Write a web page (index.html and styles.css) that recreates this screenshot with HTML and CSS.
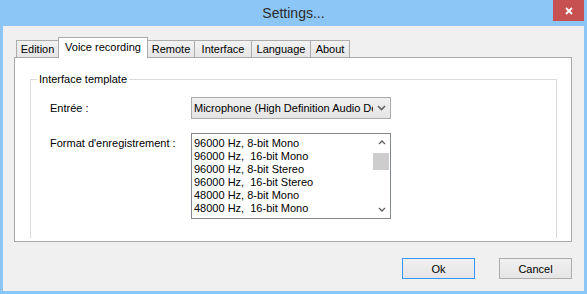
FILE: index.html
```html
<!DOCTYPE html>
<html>
<head>
    <meta charset="UTF-8">
    <title>Settings...</title>
    <link rel="stylesheet" href="styles.css">
</head>
<body>
    <div class="window">
        <div class="titlebar">
            <div class="title">Settings...</div>
            <button class="close-btn">
                <svg width="8" height="8" viewBox="0 0 8 8"><path d="M1 1L7 7M7 1L1 7" stroke="#ffffff" stroke-width="1.8"/></svg>
            </button>
        </div>

        <div class="client">
            <div class="tabs">
                <div class="tab tab-edition">Edition</div>
                <div class="tab tab-voice active">Voice recording</div>
                <div class="tab tab-remote">Remote</div>
                <div class="tab tab-interface">Interface</div>
                <div class="tab tab-language">Language</div>
                <div class="tab tab-about">About</div>
            </div>

            <div class="tab-page">
                <fieldset class="group">
                    <legend>Interface template</legend>

                    <div class="group-body">
                        <label class="field-label">Entrée :</label>
                        <div class="combo">
                            <span class="combo-text">Microphone (High Definition Audio Device)</span>
                            <span class="combo-arrow">
                                <svg width="9" height="6" viewBox="0 0 9 6"><path d="M1 1L4.5 4.5L8 1" fill="none" stroke="#606060" stroke-width="1.6"/></svg>
                            </span>
                        </div>

                        <label class="field-label field-label-top">Format d'enregistrement :</label>
                        <div class="listbox">
                            <ul class="list-items">
                                <li>96000 Hz, 8-bit Mono</li>
                                <li>96000 Hz,  16-bit Mono</li>
                                <li>96000 Hz, 8-bit Stereo</li>
                                <li>96000 Hz,  16-bit Stereo</li>
                                <li>48000 Hz, 8-bit Mono</li>
                                <li>48000 Hz,  16-bit Mono</li>
                            </ul>
                            <div class="scrollbar">
                                <div class="scroll-btn">
                                    <svg width="8" height="5" viewBox="0 0 8 5"><path d="M1 4L4 1L7 4" fill="none" stroke="#606060" stroke-width="1.4"/></svg>
                                </div>
                                <div class="scroll-track">
                                    <div class="scroll-thumb"></div>
                                </div>
                                <div class="scroll-btn">
                                    <svg width="8" height="5" viewBox="0 0 8 5"><path d="M1 1L4 4L7 1" fill="none" stroke="#606060" stroke-width="1.4"/></svg>
                                </div>
                            </div>
                        </div>
                    </div>
                </fieldset>
            </div>

            <div class="buttons">
                <button class="btn btn-default">Ok</button>
                <button class="btn">Cancel</button>
            </div>
        </div>
    </div>
</body>
</html>
```

FILE: styles.css
```css
/* Reset some default styles */
* {
    margin: 0;
    padding: 0;
    box-sizing: border-box;
}

body {
    width: 587px;
    height: 294px;
    font-family: "Liberation Sans", Arial, sans-serif;
    font-size: 11px;
    color: #000000;
    overflow: hidden;
}

.window {
    height: 294px;
    display: flex;
    flex-direction: column;
    background-color: #8cc6f6;
}

/* Title bar */
.titlebar {
    height: 26px;
    display: grid;
    grid-template-columns: 1fr auto 1fr;
    align-items: center;
}

.title {
    grid-column: 2;
    font-size: 14px;
    color: #2b2b2b;
}

.close-btn {
    grid-column: 3;
    justify-self: end;
    align-self: start;
    width: 31px;
    height: 21px;
    margin-right: 3px;
    border: none;
    background-color: #c75050;
    display: flex;
    justify-content: center;
    align-items: center;
}

/* Dialog body */
.client {
    flex: 1;
    margin: 0 3px 3px;
    padding: 11px 12px 12px 11px;
    background-color: #f0f0f0;
    display: flex;
    flex-direction: column;
}

.tabs {
    height: 20px;
    margin-left: 2px;
    display: flex;
    align-items: flex-end;
}

.tab {
    height: 17px;
    margin-left: -1px;
    border: 1px solid #acacac;
    border-bottom: none;
    background: linear-gradient(#f2f2f2, #e6e6e6);
    display: flex;
    justify-content: center;
    align-items: center;
    white-space: nowrap;
}

.tab:first-child {
    margin-left: 0;
}

.tab.active {
    height: 21px;
    margin-bottom: -1px;
    padding-bottom: 3px;
    background: #ffffff;
    position: relative;
    z-index: 1;
}

.tab-edition { width: 43px; }
.tab-voice { width: 90px; }
.tab-remote { width: 48px; }
.tab-interface { width: 58px; }
.tab-language { width: 60px; }
.tab-about { width: 40px; }

.tab-page {
    height: 185px;
    border: 1px solid #a9a9a9;
    background-color: #ffffff;
    padding: 0 14px 3px 15px;
    display: flex;
    flex-direction: column;
}

/* Group box */
.group {
    flex: 1;
    min-width: 0;
    margin-top: 15px;
    border: 1px solid #dcdcdc;
    border-bottom: none;
    padding: 0;
}

.group legend {
    margin-left: 6px;
    padding: 0 2px;
    line-height: 13px;
}

.group-body {
    padding: 11px 0 0 19px;
    display: grid;
    grid-template-columns: 141px 200px;
    grid-template-rows: 22px 86px;
    row-gap: 14px;
}

.field-label {
    align-self: center;
    line-height: 13px;
}

.field-label-top {
    align-self: start;
    padding-top: 4px;
}

.combo {
    border: 1px solid #acacac;
    background: linear-gradient(#f0f0f0, #e5e5e5);
    display: flex;
    align-items: center;
}

.combo-text {
    flex: 1;
    padding-left: 2px;
    white-space: nowrap;
    overflow: hidden;
}

.combo-arrow {
    width: 17px;
    display: flex;
    justify-content: center;
}

.listbox {
    border: 1px solid #828790;
    background-color: #ffffff;
    display: flex;
    overflow: hidden;
}

.list-items {
    flex: 1;
    list-style: none;
    padding: 3px 0 0 2px;
    line-height: 13px;
    overflow: hidden;
}

.list-items li {
    white-space: pre;
}

.scrollbar {
    width: 17px;
    display: flex;
    flex-direction: column;
}

.scroll-btn {
    height: 17px;
    display: flex;
    justify-content: center;
    align-items: center;
}

.scroll-track {
    flex: 1;
}

.scroll-thumb {
    height: 17px;
    margin: 2px 1px 0 0;
    background-color: #cdcdcd;
}

/* Dialog buttons */
.buttons {
    margin-top: 16px;
    display: flex;
    justify-content: flex-end;
    gap: 24px;
}

.btn {
    width: 73px;
    height: 21px;
    border: 1px solid #acacac;
    background: linear-gradient(#f0f0f0, #e5e5e5);
    font-family: "Liberation Sans", Arial, sans-serif;
    font-size: 11px;
    color: #000000;
}

.btn-default {
    border-color: #3399ff;
}
```
